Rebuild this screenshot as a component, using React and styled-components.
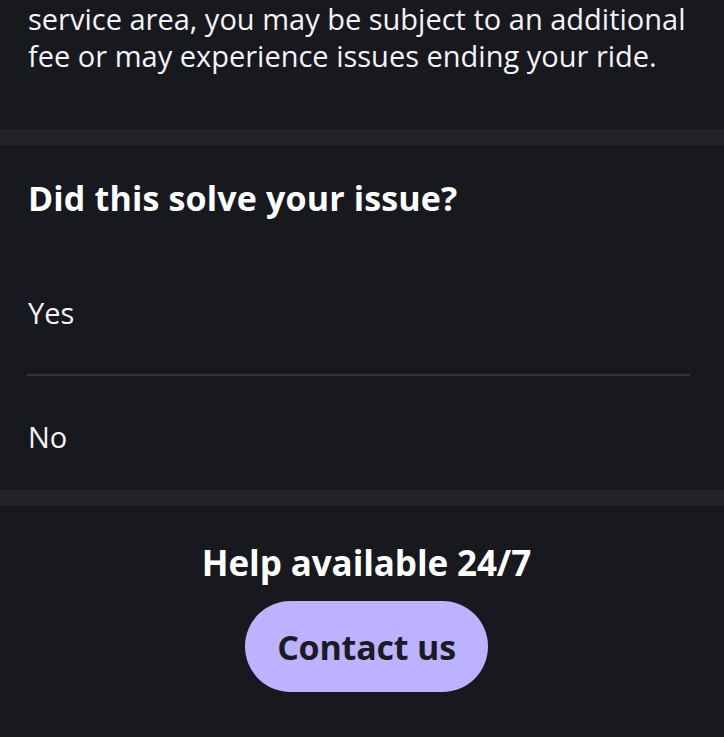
import styled, { createGlobalStyle } from "styled-components";

const GlobalStyle = createGlobalStyle`
  body {
    margin: 0;
    background: #18181f;
    font-family: "Open Sans", "Lato", sans-serif;
    color: #ffffff;
  }
`;

const Page = styled.div`
  width: 724px;
  min-height: 737px;
  background: #18181f;
  overflow: hidden;
`;

const Intro = styled.section`
  padding: 0 28px 55px 28px;
`;

const Body = styled.p`
  margin: 0;
  font-size: 29px;
  line-height: 37px;
  color: #f4f4f6;
`;

const Band = styled.div`
  height: 16px;
  background: #222328;
`;

const Feedback = styled.section`
  padding-top: 33px;
  display: flex;
  flex-direction: column;
`;

const Heading = styled.h2`
  margin: 0 0 34px 28px;
  font-size: 34px;
  line-height: 40px;
  font-weight: 700;
  letter-spacing: 0.15px;
`;

const Option = styled.div`
  padding: ${(p) => (p.$last ? "45px 28px 37px" : "45px 28px")};
  font-size: 29px;
  line-height: 32px;
  color: #f4f4f6;
`;

const Divider = styled.hr`
  margin: 0 34px 0 27px;
  border: 0;
  height: 2px;
  background: #333439;
`;

const Help = styled.section`
  display: flex;
  flex-direction: column;
  align-items: center;
  padding: 37px 0 0 9px;
`;

const HelpTitle = styled.h3`
  margin: 0;
  font-size: 35px;
  line-height: 40px;
  font-weight: 700;
  letter-spacing: -0.1px;
`;

const ContactButton = styled.button`
  margin-top: 18px;
  width: 243px;
  height: 91px;
  border: 0;
  border-radius: 46px;
  background: #bdb2ff;
  color: #1c1b22;
  font-family: "Open Sans", sans-serif;
  font-size: 34px;
  font-weight: 700;
  letter-spacing: -0.2px;
  cursor: pointer;
`;

export default function App() {
  return (
    <Page>
      <GlobalStyle />
      <Intro>
        <Body>
          service area, you may be subject to an additional fee or may
          experience issues ending your ride.
        </Body>
      </Intro>
      <Band />
      <Feedback>
        <Heading>Did this solve your issue?</Heading>
        <Option>Yes</Option>
        <Divider />
        <Option $last>No</Option>
      </Feedback>
      <Band />
      <Help>
        <HelpTitle>Help available 24/7</HelpTitle>
        <ContactButton>Contact us</ContactButton>
      </Help>
    </Page>
  );
}
